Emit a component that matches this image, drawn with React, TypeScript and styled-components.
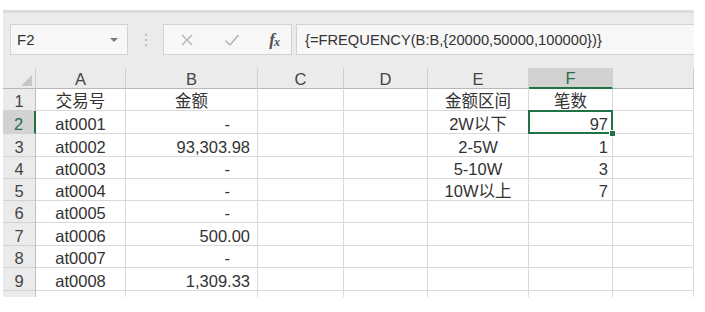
import React from 'react';
import styled, { createGlobalStyle, css } from 'styled-components';

const GlobalStyle = createGlobalStyle`
  html, body {
    margin: 0;
    padding: 0;
    background: #fff;
  }
  body {
    font-family: 'Liberation Sans', 'Noto Sans CJK SC', sans-serif;
    color: #333;
  }
`;

const Page = styled.div`
  width: 705px;
  height: 312px;
  box-sizing: border-box;
  padding: 10px 11px 15px 3px;
  background: #fff;
`;

const Window = styled.div`
  height: 287px;
  overflow: hidden;
  background: #ebebeb;
  display: flex;
  flex-direction: column;
`;

const Toolbar = styled.div`
  height: 58px;
  flex: none;
  box-sizing: border-box;
  border-top: 3px solid #dddddd;
  display: flex;
  align-items: flex-start;
  padding: 11px 0 0 7px;
`;

const Box = styled.div`
  height: 31px;
  box-sizing: border-box;
  background: #f7f7f7;
  border: 1px solid #d3d3d3;
  display: flex;
  align-items: center;
`;

const NameBox = styled(Box)`
  width: 118px;
  padding: 0 9px 0 6px;
  justify-content: space-between;
  font-size: 15px;
  color: #333;
`;

const Caret = styled.span`
  width: 0;
  height: 0;
  border-left: 4px solid transparent;
  border-right: 4px solid transparent;
  border-top: 4px solid #7a7a7a;
`;

const Divider = styled.div`
  width: 35px;
  height: 31px;
  display: flex;
  align-items: center;
  justify-content: center;
`;

const FxBox = styled(Box)`
  width: 129px;
  margin-right: 4px;
  padding: 0 12px 0 16px;
  justify-content: space-between;
`;

const FxLabel = styled.span`
  font-family: 'Liberation Serif', 'DejaVu Serif', serif;
  font-style: italic;
  font-weight: bold;
  font-size: 17px;
  color: #505050;
  letter-spacing: -1px;

  sub {
    font-size: 12px;
    vertical-align: -1px;
  }
`;

const FormulaBox = styled(Box)`
  flex: 1;
  border-right: none;
  padding-left: 8px;
  font-size: 14.7px;
  color: #333;
  white-space: nowrap;
`;

const Grid = styled.div<{ $rows: string }>`
  display: grid;
  grid-template-columns: 33px 90px 132px 86px 84px 101px 84px 81px;
  grid-template-rows: ${(p) => p.$rows};
  background: #fff;
  font-size: 16.5px;
`;

const HeadCell = styled.div<{ $active?: boolean }>`
  box-sizing: border-box;
  background: ${(p) => (p.$active ? '#d2d2d2' : '#ebebeb')};
  color: ${(p) => (p.$active ? '#2b6b46' : '#444')};
  border-right: 1px solid #cfcfcf;
  border-bottom: ${(p) => (p.$active ? '2px solid #217346' : '1px solid #b8b8b8')};
  display: flex;
  align-items: flex-end;
  justify-content: center;
  line-height: 16px;
  padding-bottom: 1px;
`;

const Corner = styled(HeadCell)`
  align-items: flex-end;
  justify-content: flex-end;
  padding: 0 3px 2px 0;
`;

const RowHead = styled.div<{ $active?: boolean }>`
  box-sizing: border-box;
  background: ${(p) => (p.$active ? '#d2d2d2' : '#ebebeb')};
  color: ${(p) => (p.$active ? '#2b6b46' : '#444')};
  border-right: ${(p) => (p.$active ? '2px solid #217346' : '1px solid #bdbdbd')};
  border-bottom: 1px solid #d2d2d2;
  display: flex;
  align-items: flex-end;
  justify-content: center;
  line-height: 16px;
  padding-bottom: 1px;
`;

const Cell = styled.div<{ $align: 'left' | 'center' | 'right'; $pad?: number; $selected?: boolean }>`
  position: relative;
  box-sizing: border-box;
  border-right: 1px solid #d9d9d9;
  border-bottom: 1px solid #d9d9d9;
  display: flex;
  align-items: flex-end;
  justify-content: ${(p) => (p.$align === 'left' ? 'flex-start' : p.$align === 'right' ? 'flex-end' : 'center')};
  padding: 0 ${(p) => p.$pad ?? 0}px 1px;
  line-height: 16px;
  color: #333;
  white-space: nowrap;

  ${(p) =>
    p.$selected &&
    css`
      &::after {
        content: '';
        position: absolute;
        left: -1px;
        top: -1px;
        right: -1px;
        bottom: -1px;
        border: 2px solid #217346;
        pointer-events: none;
      }
      &::before {
        content: '';
        position: absolute;
        right: -4px;
        bottom: -4px;
        width: 5px;
        height: 5px;
        background: #217346;
        border: 1px solid #fff;
        z-index: 2;
      }
    `}
`;

const columns = ['A', 'B', 'C', 'D', 'E', 'F', ''];

type Row = string[];

const rows: Row[] = [
  ['交易号', '金额', '', '', '金额区间', '笔数', ''],
  ['at0001', '-', '', '', '2W以下', '97', ''],
  ['at0002', '93,303.98', '', '', '2-5W', '1', ''],
  ['at0003', '-', '', '', '5-10W', '3', ''],
  ['at0004', '-', '', '', '10W以上', '7', ''],
  ['at0005', '-', '', '', '', '', ''],
  ['at0006', '500.00', '', '', '', '', ''],
  ['at0007', '-', '', '', '', '', ''],
  ['at0008', '1,309.33', '', '', '', '', ''],
  ['', '', '', '', '', '', ''],
];

const rowHeights = [21, 22, 23, 23, 22, 22, 22, 23, 22, 23, 22];

function cellProps(r: number, c: number, value: string) {
  if (r === 0) return { $align: 'center' as const };
  if (c === 0 || c === 4) return { $align: 'center' as const };
  if (c === 1) return { $align: 'right' as const, $pad: value === '-' ? 27 : 7 };
  if (c === 5) return { $align: 'right' as const, $pad: 4, $selected: r === 1 };
  return { $align: 'left' as const, $pad: 3 };
}

function CloseIcon() {
  return (
    <svg width="14" height="14" viewBox="0 0 14 14">
      <path d="M2 2 L12 12 M12 2 L2 12" stroke="#b4b4b4" strokeWidth="1.3" fill="none" />
    </svg>
  );
}

function CheckIcon() {
  return (
    <svg width="16" height="14" viewBox="0 0 16 14">
      <path d="M1.5 7.5 L6 12 L14.5 2" stroke="#b4b4b4" strokeWidth="1.5" fill="none" />
    </svg>
  );
}

function Dots() {
  return (
    <svg width="4" height="14" viewBox="0 0 4 14">
      <circle cx="2" cy="2" r="1" fill="#b0b0b0" />
      <circle cx="2" cy="7" r="1" fill="#b0b0b0" />
      <circle cx="2" cy="12" r="1" fill="#b0b0b0" />
    </svg>
  );
}

function CornerMark() {
  return (
    <svg width="11" height="11" viewBox="0 0 11 11">
      <path d="M11 0 L11 11 L0 11 Z" fill="#c6c6c6" />
    </svg>
  );
}

export default function App() {
  return (
    <Page>
      <GlobalStyle />
      <Window>
        <Toolbar>
          <NameBox>
            F2
            <Caret />
          </NameBox>
          <Divider>
            <Dots />
          </Divider>
          <FxBox>
            <CloseIcon />
            <CheckIcon />
            <FxLabel>
              f<sub>x</sub>
            </FxLabel>
          </FxBox>
          <FormulaBox>{'{=FREQUENCY(B:B,{20000,50000,100000})}'}</FormulaBox>
        </Toolbar>
        <Grid $rows={rowHeights.map((h) => `${h}px`).join(' ')}>
          <Corner>
            <CornerMark />
          </Corner>
          {columns.map((col, i) => (
            <HeadCell key={i} $active={col === 'F'}>
              {col}
            </HeadCell>
          ))}
          {rows.map((row, r) => (
            <React.Fragment key={r}>
              {/* the last row is cut by the window edge, so no number */}
              <RowHead $active={r === 1}>{r < rows.length - 1 ? r + 1 : ''}</RowHead>
              {row.map((value, c) => (
                <Cell key={c} {...cellProps(r, c, value)}>
                  {value}
                </Cell>
              ))}
            </React.Fragment>
          ))}
        </Grid>
      </Window>
    </Page>
  );
}
